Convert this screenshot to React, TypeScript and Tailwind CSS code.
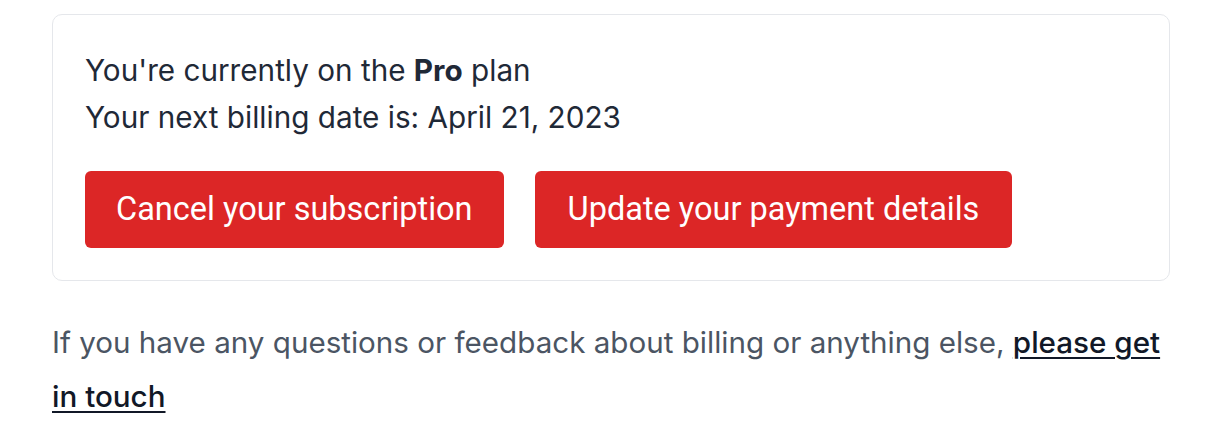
import React from "react";

export default function App() {
  return (
    <div className="w-[1220px] h-[428px] bg-white pl-[52px] pr-[50px] pt-[14px]" style={{ fontFamily: "Inter, 'Noto Sans', sans-serif" }}>
      <div className="rounded-[10px] border border-[#e5e7eb] px-[32px] pt-[32px] pb-[32px]">
        <div className="text-[29.7px] leading-[47px] text-[#1f2937]">
          <p>
            You're currently on the <span className="font-bold">Pro</span> plan
          </p>
          <p>Your next billing date is: April 21, 2023</p>
        </div>
        <div className="mt-[30px] flex gap-[31px]" style={{ fontFamily: "Roboto, sans-serif" }}>
          <button className="h-[77px] rounded-[6px] bg-[#dc2626] px-[31px] text-[32.5px] text-white">
            Cancel your subscription
          </button>
          <button className="h-[77px] rounded-[6px] bg-[#dc2626] px-[33px] text-[32.5px] text-white">
            Update your payment details
          </button>
        </div>
      </div>
      <p className="mt-[34px] text-[29.6px] leading-[54px] text-[#4b5563]">
        If you have any questions or feedback about billing or anything else,{" "}
        <a className="font-medium text-[#111827] underline decoration-2 underline-offset-[4px]">please get in touch</a>
      </p>
    </div>
  );
}
